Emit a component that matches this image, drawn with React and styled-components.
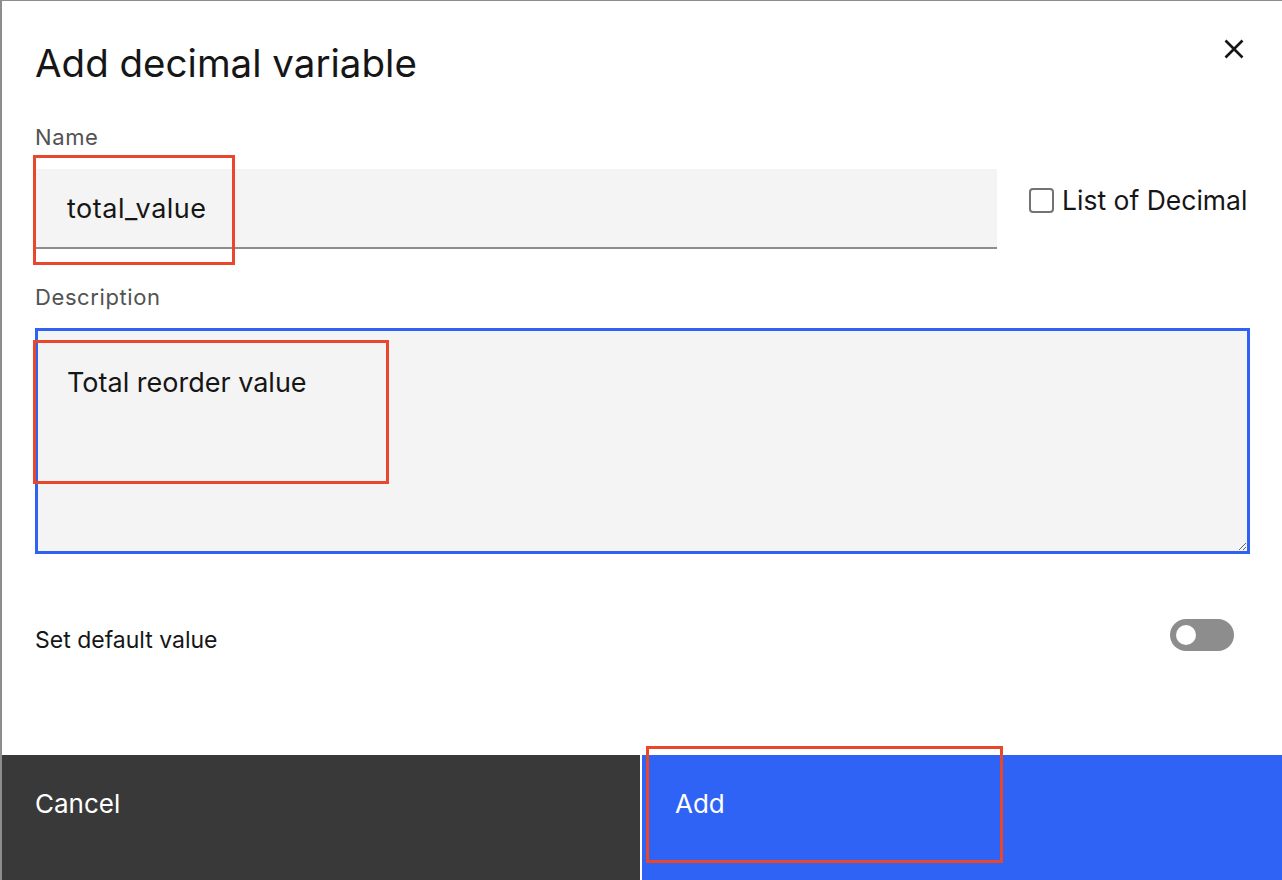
import styled, { createGlobalStyle } from "styled-components";

const GlobalStyle = createGlobalStyle`
  html, body {
    margin: 0;
    padding: 0;
    background: #ffffff;
  }
  * {
    box-sizing: border-box;
  }
`;

const Modal = styled.div`
  position: relative;
  width: 1282px;
  height: 880px;
  display: flex;
  flex-direction: column;
  border-left: 2px solid #8d8d8d;
  border-top: 1px solid #8d8d8d;
  background: #ffffff;
  font-family: Inter, "Noto Sans", sans-serif;
  color: #161616;
  overflow: hidden;
`;

const Header = styled.div`
  display: flex;
  justify-content: space-between;
  align-items: flex-start;
  padding: 36px 38px 0 33px;
`;

const Title = styled.h2`
  margin: 0;
  font-size: 38.5px;
  line-height: 52px;
  font-weight: 400;
  color: #161616;
`;

const CloseButton = styled.button`
  border: none;
  background: none;
  padding: 0;
  margin-top: 2px;
  width: 20px;
  height: 20px;
  display: flex;
  cursor: pointer;
`;

const Body = styled.div`
  flex: 1;
  display: flex;
  flex-direction: column;
  padding: 0 32px 0 33px;
`;

const Label = styled.label`
  display: block;
  font-size: 22px;
  line-height: 24px;
  letter-spacing: 0.6px;
  color: #525252;
  margin-top: ${(p) => p.$top}px;
  margin-bottom: ${(p) => p.$bottom}px;
`;

const NameRow = styled.div`
  display: flex;
  align-items: center;
`;

const TextInput = styled.input`
  display: block;
  width: 962px;
  height: 80px;
  border: none;
  border-bottom: 2px solid #8d8d8d;
  background: #f4f4f4;
  padding: 0 32px;
  font-family: inherit;
  font-size: 27px;
  letter-spacing: 0.5px;
  color: #161616;
  outline: none;
`;

const CheckboxLabel = styled.label`
  display: flex;
  align-items: center;
  gap: 8px;
  margin-left: 32px;
  margin-top: -18px;
  font-size: 26.5px;
  color: #161616;
`;

const Box = styled.span`
  width: 25px;
  height: 25px;
  border: 2px solid #737373;
  border-radius: 4px;
  background: #ffffff;
`;

const TextArea = styled.textarea`
  display: block;
  width: 1215px;
  height: 226px;
  border: 3px solid #2f62f4;
  background: #f4f4f4;
  padding: 36px 29px;
  font-family: inherit;
  font-size: 27px;
  line-height: 32px;
  color: #161616;
  outline: none;
  resize: both;
`;

const ToggleRow = styled.div`
  display: flex;
  justify-content: space-between;
  align-items: flex-start;
  margin-top: 65px;
  width: 1199px;
`;

const ToggleText = styled.span`
  font-size: 23px;
  line-height: 32px;
  color: #161616;
  margin-top: 5px;
`;

const Toggle = styled.span`
  position: relative;
  width: 64px;
  height: 32px;
  border-radius: 16px;
  background: #8d8d8d;

  &::after {
    content: "";
    position: absolute;
    left: 6px;
    top: 6px;
    width: 20px;
    height: 20px;
    border-radius: 50%;
    background: #ffffff;
  }
`;

const Footer = styled.div`
  display: grid;
  grid-template-columns: 638px 1fr;
  gap: 2px;
  height: 125px;
`;

const FooterButton = styled.button`
  border: none;
  margin: 0;
  background: ${(p) => (p.$primary ? "#2e63f5" : "#393939")};
  color: #ffffff;
  font-family: Inter, "Noto Sans", sans-serif;
  font-size: 26px;
  text-align: left;
  padding: 0 0 28px 33px;
  cursor: pointer;
`;

const Marker = styled.div`
  position: absolute;
  border: 3px solid #e8472c;
  pointer-events: none;
`;

function CloseIcon() {
  return (
    <svg width="20" height="20" viewBox="0 0 20 20" fill="none">
      <path d="M1.5 1.5 L18.5 18.5 M18.5 1.5 L1.5 18.5" stroke="#161616" strokeWidth="2.6" />
    </svg>
  );
}

export default function App() {
  return (
    <>
      <GlobalStyle />
      <Modal>
        <Header>
          <Title>Add decimal variable</Title>
          <CloseButton aria-label="Close">
            <CloseIcon />
          </CloseButton>
        </Header>
        <Body>
          <Label $top={36} $bottom={20}>Name</Label>
          <NameRow>
            <TextInput defaultValue="total_value" />
            <CheckboxLabel>
              <Box />
              List of Decimal
            </CheckboxLabel>
          </NameRow>
          <Label $top={36} $bottom={19}>Description</Label>
          <TextArea defaultValue="Total reorder value" />
          <ToggleRow>
            <ToggleText>Set default value</ToggleText>
            <Toggle />
          </ToggleRow>
        </Body>
        <Footer>
          <FooterButton>Cancel</FooterButton>
          <FooterButton $primary>Add</FooterButton>
        </Footer>
        <Marker style={{ left: 31, top: 154, width: 202, height: 110 }} />
        <Marker style={{ left: 31, top: 339, width: 356, height: 144 }} />
        <Marker style={{ left: 644, top: 745, width: 357, height: 117 }} />
      </Modal>
    </>
  );
}
